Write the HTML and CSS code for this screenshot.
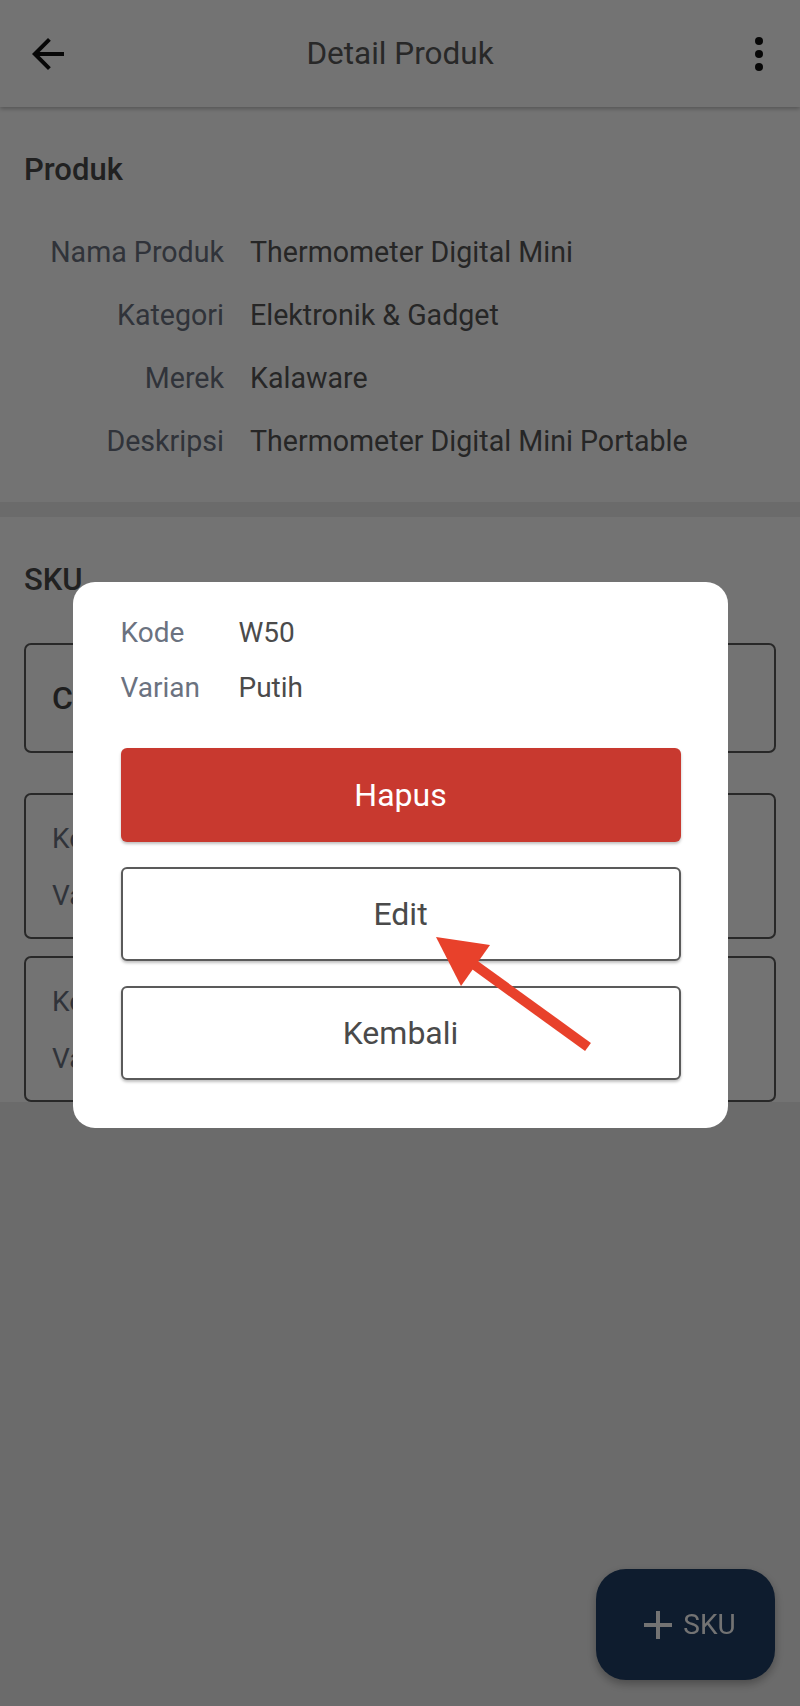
FILE: index.html
```html
<!DOCTYPE html>
<html lang="id">
<head>
<meta charset="utf-8">
<title>Detail Produk</title>
<link rel="stylesheet" href="styles.css">
</head>
<body>
<div class="page">
  <header class="appbar">
    <svg class="icon back" viewBox="0 0 24 24"><path d="M20 11H7.83l5.59-5.59L12 4l-8 8 8 8 1.41-1.41L7.83 13H20v-2z"/></svg>
    <h1 class="title">Detail Produk</h1>
    <svg class="icon more" viewBox="0 0 24 24"><circle cx="12" cy="5.5" r="2"/><circle cx="12" cy="12" r="2"/><circle cx="12" cy="18.5" r="2"/></svg>
  </header>

  <section class="panel produk">
    <h2 class="heading">Produk</h2>
    <dl class="info">
      <dt>Nama Produk</dt><dd>Thermometer Digital Mini</dd>
      <dt>Kategori</dt><dd>Elektronik &amp; Gadget</dd>
      <dt>Merek</dt><dd>Kalaware</dd>
      <dt>Deskripsi</dt><dd>Thermometer Digital Mini Portable</dd>
    </dl>
  </section>

  <section class="panel sku">
    <h2 class="heading">SKU</h2>
    <div class="card search">Cari SKU</div>
    <div class="card sku-item">
      <dl class="kv"><dt>Kode</dt><dd>W50</dd><dt>Varian</dt><dd>Putih</dd></dl>
    </div>
    <div class="card sku-item">
      <dl class="kv"><dt>Kode</dt><dd>W51</dd><dt>Varian</dt><dd>Hitam</dd></dl>
    </div>
  </section>

  <button class="fab"><svg class="plus" viewBox="0 0 30 30"><path d="M15 1v28M1 15h28"/></svg><span>SKU</span></button>
</div>

<div class="overlay">
  <div class="modal">
    <dl class="kv modal-kv">
      <dt>Kode</dt><dd>W50</dd>
      <dt>Varian</dt><dd>Putih</dd>
    </dl>
    <div class="actions">
      <button class="btn danger">Hapus</button>
      <button class="btn outline">Edit</button>
      <button class="btn outline">Kembali</button>
    </div>
  </div>
  <svg class="annot" viewBox="0 0 800 1706" width="800" height="1706">
    <line x1="472" y1="963" x2="588" y2="1047" stroke="#e8412b" stroke-width="10"/>
    <polygon points="436,937 490,945 461,986" fill="#e8412b"/>
  </svg>
</div>
</body>
</html>
```

FILE: styles.css
```css
* { box-sizing: border-box; }
html, body { margin: 0; padding: 0; }
body {
  background: #eeeeee;
  font-family: Roboto, "Noto Sans", "Liberation Sans", sans-serif;
  width: 800px;
  height: 1706px;
  overflow: hidden;
}
.page { min-height: 1706px; }

.appbar {
  height: 107px;
  background: #fff;
  display: grid;
  grid-template-columns: 1fr auto 1fr;
  align-items: center;
  padding: 0 17px 0 24px;
  box-shadow: 0 2px 4px rgba(0,0,0,0.25);
  position: relative;
  z-index: 1;
}
.icon { width: 48px; height: 48px; fill: #111; }
.more { justify-self: end; }
.title {
  margin: 0 0 0 -7px;
  font-size: 31.5px;
  font-weight: 400;
  color: #5a5a5a;
  line-height: 36px;
}

.panel { background: #fff; padding: 45px 24px 0; }
.produk { padding-bottom: 41px; margin-bottom: 15px; }
.heading {
  margin: 0;
  font-size: 31px;
  line-height: 36px;
  font-weight: 500;
  color: #4a4a4a;
}
.info {
  margin: 44px 0 0;
  display: grid;
  grid-template-columns: 200px 1fr;
  column-gap: 26px;
  row-gap: 23px;
  font-size: 28.6px;
  line-height: 40px;
}
.info dt { text-align: right; color: #6b7280; }
.info dd { margin: 0; color: #555; }

.sku { padding-bottom: 0; }
.card {
  border: 2px solid #5a5a5a;
  border-radius: 7px;
  background: #fff;
}
.search {
  margin-top: 45px;
  height: 110px;
  display: flex;
  align-items: center;
  padding: 0 26px;
  font-size: 32px;
  font-weight: 500;
  color: #444;
  margin-bottom: 40px;
}
.sku-item { padding: 24px 26px 21px; height: 146px; }
.sku-item + .sku-item { margin-top: 17px; }
.kv {
  margin: 0;
  display: grid;
  grid-template-columns: 118px 1fr;
  row-gap: 17px;
  font-size: 28px;
  line-height: 40px;
}
.kv dt { color: #6b7280; }
.kv dd { margin: 0; color: #4b4b4b; }

.fab {
  position: fixed;
  right: 25px;
  bottom: 26px;
  width: 179px;
  height: 111px;
  border: none;
  border-radius: 30px;
  background: #1f3e66;
  color: #fff;
  font-family: Roboto, "Noto Sans", sans-serif;
  font-size: 28px;
  display: flex;
  align-items: center;
  justify-content: center;
  gap: 10px;
  padding: 0 0 0 8px;
  box-shadow: 0 4px 10px rgba(0,0,0,0.3);
}
.plus { width: 30px; height: 30px; stroke: #fff; stroke-width: 4; fill: none; }

.overlay {
  position: fixed;
  inset: 0;
  background: rgba(0,0,0,0.55);
  display: flex;
  align-items: center;
  justify-content: center;
  z-index: 10;
}
.modal {
  width: 655px;
  background: #fff;
  border-radius: 22px;
  padding: 31px 47px 48px 48px;
  margin-top: 3px;
}
.modal-kv { row-gap: 15px; }
.actions {
  margin-top: 40px;
  display: flex;
  flex-direction: column;
  gap: 25px;
}
.btn {
  height: 94px;
  width: 100%;
  border-radius: 6px;
  font-family: Roboto, "Noto Sans", sans-serif;
  font-size: 32px;
  box-shadow: 0 2px 3px rgba(0,0,0,0.25);
}
.danger { background: #c8392f; color: #fff; border: none; }
.outline { background: #fff; color: #4a4a4a; border: 2px solid #5a5a5a; }

.annot { position: absolute; left: 0; top: 0; pointer-events: none; }
```
